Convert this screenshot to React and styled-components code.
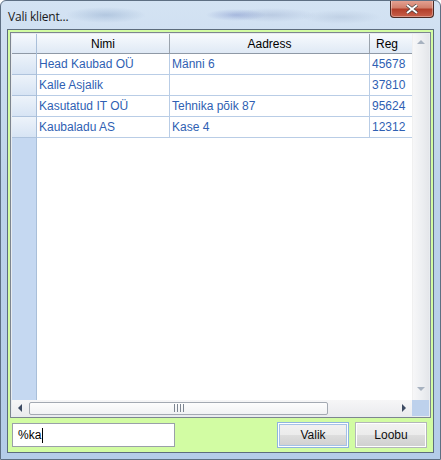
import React from 'react';
import styled, { createGlobalStyle } from 'styled-components';

const GlobalStyle = createGlobalStyle`
  html, body {
    margin: 0;
    padding: 0;
    background: #ffffff;
  }
`;

const Window = styled.div`
  width: 441px;
  height: 460px;
  box-sizing: border-box;
  display: flex;
  flex-direction: column;
  border: 1px solid #5e6f83;
  border-radius: 6px 6px 0 0;
  background:
    radial-gradient(ellipse 40px 8px at 105px 14px, rgba(120, 150, 190, 0.35), transparent),
    radial-gradient(ellipse 30px 6px at 235px 14px, rgba(120, 140, 200, 0.45), transparent),
    radial-gradient(ellipse 45px 7px at 270px 14px, rgba(130, 150, 190, 0.3), transparent),
    radial-gradient(ellipse 40px 7px at 340px 16px, rgba(140, 160, 190, 0.25), transparent),
    linear-gradient(180deg, #d4e3f3 0%, #bcd2ea 40%, #b4cce8 100%);
  font-family: 'Liberation Sans', Arial, sans-serif;
  overflow: hidden;
`;

const TitleBar = styled.div`
  height: 28px;
  display: flex;
  align-items: flex-start;
  justify-content: space-between;
  padding-left: 7px;
`;

const Title = styled.span`
  margin-top: 7px;
  font-family: 'Open Sans', 'DejaVu Sans', sans-serif;
  font-size: 12px;
  color: #1a1a1a;
  letter-spacing: -0.2px;
`;

const CloseButton = styled.div`
  width: 44px;
  height: 18px;
  margin-right: 6px;
  margin-top: -1px;
  box-sizing: border-box;
  border: 1px solid #4b2a24;
  border-top: none;
  border-radius: 0 0 4px 4px;
  background: linear-gradient(180deg, #e6a596 0%, #d2806c 45%, #b33f2a 55%, #c8604a 100%);
  display: flex;
  align-items: center;
  justify-content: center;
  box-shadow: inset 0 0 0 1px rgba(255, 255, 255, 0.35);
`;

const Body = styled.div`
  flex: 1;
  margin: 0 6px 6px 6px;
  border: 1px solid #5d6c7d;
  background: #d2fca3;
  display: flex;
  flex-direction: column;
  padding: 2px 2px 4px 2px;
  min-height: 0;
`;

const TableFrame = styled.div`
  flex: 1;
  min-height: 0;
  border: 1px solid #7d8590;
  box-shadow: inset 0 0 0 1px #e8ecf0;
  padding: 1px;
  background: #ffffff;
  display: grid;
  grid-template-columns: 1fr 17px;
  grid-template-rows: 1fr 16px;
`;

const Viewport = styled.div`
  display: grid;
  grid-template-columns: 25px 1fr;
  overflow: hidden;
  background: #ffffff;
`;

const RowHeaderColumn = styled.div`
  display: flex;
  flex-direction: column;
  background: #c5d8f1;
  border-right: 1px solid #a9bfd9;
`;

const Corner = styled.div`
  height: 20px;
  box-sizing: border-box;
  border-bottom: 1px solid #8f99a6;
  background: linear-gradient(180deg, #f6f9fd 0%, #dde8f5 100%);
`;

const RowHeaderCell = styled.div`
  height: 21px;
  box-sizing: border-box;
  border-bottom: 1px solid #aec3dd;
  background: linear-gradient(180deg, #edf3fa 0%, #d7e4f4 100%);
`;

const DataArea = styled.div`
  overflow: hidden;
  display: flex;
  flex-direction: column;
`;

const Row = styled.div`
  display: grid;
  grid-template-columns: 133px 200px 1fr;
  height: ${(p) => (p.$header ? 20 : 21)}px;
  box-sizing: border-box;
  border-bottom: 1px solid ${(p) => (p.$header ? '#8f99a6' : '#b9cde6')};
  background: ${(p) =>
    p.$header ? 'linear-gradient(180deg, #f7fafd 0%, #dfe9f5 100%)' : '#ffffff'};
`;

const HeaderCell = styled.div`
  display: flex;
  align-items: center;
  justify-content: ${(p) => (p.$last ? 'flex-start' : 'center')};
  padding-left: ${(p) => (p.$last ? 6 : 0)}px;
  border-right: ${(p) => (p.$last ? 'none' : '1px solid #9aa3ad')};
  font-size: 12px;
  color: #000000;
  white-space: nowrap;
`;

const Cell = styled.div`
  display: flex;
  align-items: center;
  padding-left: 2px;
  border-right: ${(p) => (p.$last ? 'none' : '1px solid #b9cde6')};
  font-size: 12px;
  color: #2f5fb3;
  white-space: nowrap;
`;

const VScroll = styled.div`
  display: flex;
  flex-direction: column;
  justify-content: space-between;
  align-items: center;
  background: linear-gradient(90deg, #f7f7f8 0%, #eceef1 60%, #e4e6ea 100%);
  border-left: 1px solid #f0f0f0;
  padding: 4px 0 5px 0;
`;

const HScroll = styled.div`
  display: flex;
  align-items: center;
  background: linear-gradient(180deg, #f6f6f7 0%, #eaebee 100%);
  padding: 0 2px 0 4px;
  gap: 3px;
`;

const Thumb = styled.div`
  width: 299px;
  height: 13px;
  box-sizing: border-box;
  border: 1px solid #a3a9b2;
  border-radius: 2px;
  background: linear-gradient(180deg, #fdfdfd 0%, #f1f2f4 100%);
  display: flex;
  align-items: center;
  justify-content: center;
  gap: 1px;
`;

const Grip = styled.span`
  width: 1px;
  height: 8px;
  background: #7d8591;
  margin-left: ${(p) => (p.$gapLeft ? 0 : 1)}px;
`;

const Track = styled.div`
  flex: 1;
`;

const ScrollCorner = styled.div`
  background: #bdd1ec;
`;

const Footer = styled.div`
  display: flex;
  align-items: center;
  padding: 4px 4px 0 2px;
  gap: 6px;
`;

const SearchField = styled.div`
  width: 163px;
  height: 24px;
  box-sizing: border-box;
  border: 1px solid #9aa0a8;
  background: #ffffff;
  display: flex;
  align-items: center;
  padding-left: 5px;
  font-size: 12px;
  color: #000000;
  margin-right: auto;
`;

const Caret = styled.span`
  display: inline-block;
  width: 1px;
  height: 15px;
  background: #000000;
  margin-left: 1px;
`;

const Button = styled.div`
  width: 72px;
  height: 26px;
  box-sizing: border-box;
  border: 1px solid ${(p) => (p.$focused ? '#8fb4de' : '#b3b6ba')};
  box-shadow: ${(p) =>
    p.$focused ? 'inset 0 0 0 1px #ffffff, inset 0 0 0 2px #a4c2e6' : 'inset 0 0 0 1px #ffffff'};
  background: linear-gradient(180deg, #f2f2f2 0%, #ebebeb 50%, #dddddd 51%, #cfcfcf 100%);
  display: flex;
  align-items: center;
  justify-content: center;
  font-size: 12px;
  color: #101010;
`;

const rows = [
  { name: 'Head Kaubad OÜ', address: 'Männi 6', reg: '45678' },
  { name: 'Kalle Asjalik', address: '', reg: '37810' },
  { name: 'Kasutatud IT OÜ', address: 'Tehnika põik 87', reg: '95624' },
  { name: 'Kaubaladu AS', address: 'Kase 4', reg: '12312' },
];

const Arrow = ({ dir }) => {
  const shapes = {
    up: '1,6 5,2 9,6',
    down: '1,2 5,6 9,2',
    left: '6,1 2,5 6,9',
    right: '2,1 6,5 2,9',
  };
  const fill = dir === 'left' || dir === 'right' ? '#3d4b63' : '#a7b2c0';
  return (
    <svg width="10" height="10" viewBox="0 0 10 10">
      <polygon points={shapes[dir]} fill={fill} />
    </svg>
  );
};

export default function App() {
  return (
    <>
      <GlobalStyle />
      <Window>
        <TitleBar>
          <Title>Vali klient...</Title>
          <CloseButton>
            <svg width="14" height="10" viewBox="0 0 14 10">
              <path d="M2 1 L12 9 M12 1 L2 9" stroke="#3a3a3a" strokeWidth="3.2" />
              <path d="M2 1 L12 9 M12 1 L2 9" stroke="#ffffff" strokeWidth="2" />
            </svg>
          </CloseButton>
        </TitleBar>
        <Body>
          <TableFrame>
            <Viewport>
              <RowHeaderColumn>
                <Corner />
                {rows.map((r) => (
                  <RowHeaderCell key={r.name} />
                ))}
              </RowHeaderColumn>
              <DataArea>
                <Row $header>
                  <HeaderCell>Nimi</HeaderCell>
                  <HeaderCell>Aadress</HeaderCell>
                  <HeaderCell $last>Reg</HeaderCell>
                </Row>
                {rows.map((r) => (
                  <Row key={r.name}>
                    <Cell>{r.name}</Cell>
                    <Cell>{r.address}</Cell>
                    <Cell $last>{r.reg}</Cell>
                  </Row>
                ))}
              </DataArea>
            </Viewport>
            <VScroll>
              <Arrow dir="up" />
              <Arrow dir="down" />
            </VScroll>
            <HScroll>
              <Arrow dir="left" />
              <Thumb>
                <Grip $gapLeft />
                <Grip />
                <Grip />
                <Grip />
              </Thumb>
              <Track />
              <Arrow dir="right" />
            </HScroll>
            <ScrollCorner />
          </TableFrame>
          <Footer>
            <SearchField>
              %ka<Caret />
            </SearchField>
            <Button $focused>Valik</Button>
            <Button>Loobu</Button>
          </Footer>
        </Body>
      </Window>
    </>
  );
}
